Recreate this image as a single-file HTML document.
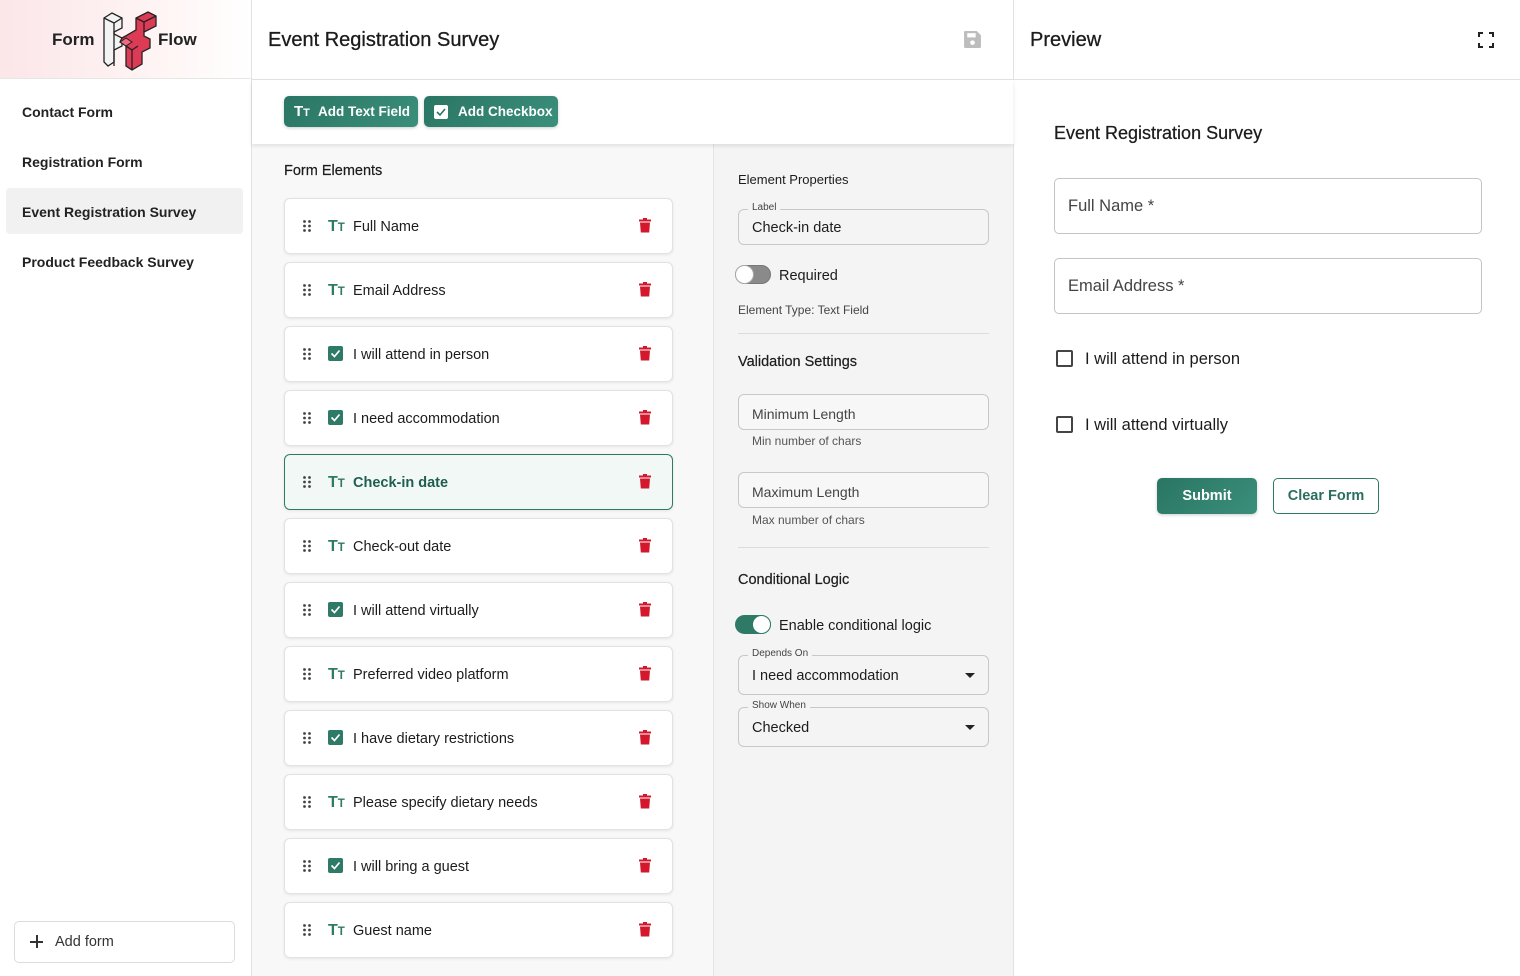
<!DOCTYPE html>
<html><head><meta charset="utf-8"><style>
*{box-sizing:border-box;margin:0;padding:0}
body{width:1520px;height:976px;overflow:hidden;font-family:"Liberation Sans","DejaVu Sans",sans-serif;color:#1c1c1c;background:#fff;position:relative;font-size:14px}
.abs{position:absolute}
.side{left:0;top:0;width:252px;height:976px;border-right:1px solid #e2e2e2;background:#fff}
.logo{left:0;top:0;width:251px;height:79px;background:linear-gradient(90deg,#fbe6e8,#fff6f6 70%,#fff);border-bottom:1px solid #e6e6e6}
.nav{left:6px;width:237px;height:46px;border-radius:4px;padding-left:16px;line-height:48px;font-size:14px;font-weight:600;color:#222}
.hdr{top:0;height:80px;border-bottom:1px solid #e2e2e2;background:#fff}
.tb{left:252px;top:80px;width:761px;height:64px;background:#fff;box-shadow:0 2px 4px rgba(0,0,0,.1);z-index:2}
.btn{top:96px;height:31px;background:linear-gradient(135deg,#2a7563,#3a8f7b);color:#fff;border-radius:5px;font-weight:700;font-size:13.5px;line-height:31px;box-shadow:0 1px 3px rgba(0,0,0,.2)}
.item{left:284px;width:389px;height:56px;background:#fff;border:1px solid #e2e2e2;border-radius:6px;box-shadow:0 1px 3px rgba(0,0,0,.08)}
.item .dots{position:absolute;left:18px;top:21px}
.item .ic{position:absolute;left:43px;top:19px}
.item .t{position:absolute;left:68px;top:1px;line-height:54px;font-size:14.5px}
.item .del{position:absolute;left:354px;top:19px}
.tt{position:absolute;left:43px;top:20px;color:#2f7a66;font-weight:700;font-size:16px;line-height:16px;height:16px}
.tt span{font-size:11.5px}
.field{border:1px solid #c8c8c8;border-radius:6px;background:transparent}
.lbl{font-size:10px;color:#444;background:#f4f4f4;padding:0 4px}
.sep{height:1px;background:#dcdcdc;left:738px;width:251px}
</style></head><body>

<div class="abs side"></div>
<div class="abs logo"></div>
<div class="abs" style="left:52px;top:30px;font-size:17px;font-weight:700;color:#222">Form</div>
<div class="abs" style="left:158px;top:30px;font-size:17px;font-weight:700;color:#222">Flow</div>
<svg class="abs" style="left:100px;top:10px" width="60" height="62" viewBox="0 0 60 62">
<path d="M4 8 L12 3 L22 8 L22 18 L14 22 L14 24 L22 28 L22 36 L14 40 L14 52 L8 56 L4 52Z" fill="#f3f3f3" stroke="#222" stroke-width="1.3"/>
<path d="M4 8 L14 13 L22 8 M14 13 L14 56" fill="none" stroke="#222" stroke-width="1.3"/>
<path d="M22 28 L36 20 L36 8 L48 2 L56 6 L56 16 L44 22 L44 26 L50 29 L50 38 L42 42 L42 54 L32 60 L26 56 L26 36 L20 32Z" fill="#dd3a55" stroke="#222" stroke-width="1.3"/>
<path d="M26 36 L32 40 L32 60 M32 40 L38 36 M36 8 L44 12 L56 6 M44 12 L44 22" fill="none" stroke="#222" stroke-width="1.3"/>
<path d="M20 32 L26 28 L32 32 L26 36Z" fill="#ef6b80" stroke="#222" stroke-width="1"/>
</svg>

<div class="abs nav" style="top:88px">Contact Form</div>
<div class="abs nav" style="top:138px">Registration Form</div>
<div class="abs nav" style="top:188px;background:#f1f1f1">Event Registration Survey</div>
<div class="abs nav" style="top:238px">Product Feedback Survey</div>
<div class="abs" style="left:14px;top:921px;width:221px;height:42px;border:1px solid #dcdcdc;border-radius:5px;line-height:41px;padding-left:40px;font-size:14.5px;color:#333">Add form</div>
<div class="abs" style="left:30px;top:941px;width:13px;height:1.5px;background:#333"></div>
<div class="abs" style="left:36px;top:935px;width:1.5px;height:13px;background:#333"></div>

<!-- middle -->
<div class="abs hdr" style="left:252px;width:762px;border-right:1px solid #e2e2e2"></div>
<div class="abs" style="left:268px;top:29px;font-size:20px;color:#1c1c1c;-webkit-text-stroke:0.3px #1c1c1c">Event Registration Survey</div>
<svg class="abs" style="left:963px;top:30px" width="19" height="19" viewBox="0 0 18 18"><path d="M2 1h11l4 4v11a1 1 0 0 1-1 1H2a1 1 0 0 1-1-1V2a1 1 0 0 1 1-1z" fill="#bdbdbd"/><rect x="4" y="3" width="8" height="4" fill="#fff"/><circle cx="9" cy="12" r="2.2" fill="#fff"/></svg>

<div class="abs" style="left:252px;top:144px;width:461px;height:832px;background:#f8f8f8"></div>
<div class="abs" style="left:713px;top:144px;width:301px;height:832px;background:#f4f4f4;border-left:1px solid #e4e4e4;border-right:1px solid #e2e2e2"></div>
<div class="abs tb"></div>
<div class="abs btn" style="left:284px;width:134px;z-index:3;padding-left:34px">Add Text Field</div>
<div class="abs" style="left:294px;top:104px;z-index:4;color:#fff;font-weight:700;font-size:15px;line-height:15px">T<span style="font-size:11px">T</span></div>
<div class="abs btn" style="left:424px;width:134px;z-index:3;padding-left:34px">Add Checkbox</div>
<svg class="abs" style="left:434px;top:105px;z-index:4" width="14" height="14"><rect width="14" height="14" rx="2" fill="#fff"/><path d="M3 7l3 3 5-6" stroke="#2a7563" stroke-width="1.6" fill="none"/></svg>

<div class="abs" style="left:284px;top:163px;font-size:14.5px;-webkit-text-stroke:0.2px #1c1c1c">Form Elements</div>

<div id="list"></div>

<!-- properties -->
<div class="abs" style="left:738px;top:172px;font-size:13px">Element Properties</div>
<div class="abs field" style="left:738px;top:209px;width:251px;height:36px"></div>
<div class="abs lbl" style="left:748px;top:202px">Label</div>
<div class="abs" style="left:752px;top:220px;font-size:14.5px">Check-in date</div>
<div class="abs" style="left:735px;top:265px;width:36px;height:19px;border-radius:10px;background:#8a8a8a;border:1px solid #777"></div>
<div class="abs" style="left:735px;top:265px;width:19px;height:19px;border-radius:50%;background:#fff;border:1px solid #aaa"></div>
<div class="abs" style="left:779px;top:268px;font-size:14.5px">Required</div>
<div class="abs" style="left:738px;top:303px;font-size:12px;color:#444">Element Type: Text Field</div>
<div class="abs sep" style="top:333px"></div>
<div class="abs" style="left:738px;top:354px;font-size:14.5px;-webkit-text-stroke:0.2px #1c1c1c">Validation Settings</div>
<div class="abs field" style="left:738px;top:394px;width:251px;height:36px;background:#f7f7f7"></div>
<div class="abs" style="left:752px;top:406px;font-size:14px;color:#444">Minimum Length</div>
<div class="abs" style="left:752px;top:434px;font-size:12px;color:#555">Min number of chars</div>
<div class="abs field" style="left:738px;top:472px;width:251px;height:36px;background:#f7f7f7"></div>
<div class="abs" style="left:752px;top:484px;font-size:14px;color:#444">Maximum Length</div>
<div class="abs" style="left:752px;top:513px;font-size:12px;color:#555">Max number of chars</div>
<div class="abs sep" style="top:547px"></div>
<div class="abs" style="left:738px;top:572px;font-size:14.5px;-webkit-text-stroke:0.2px #1c1c1c">Conditional Logic</div>
<div class="abs" style="left:735px;top:615px;width:36px;height:19px;border-radius:10px;background:#2f7a66"></div>
<div class="abs" style="left:752px;top:615px;width:19px;height:19px;border-radius:50%;background:#fff;border:1px solid #2f7a66"></div>
<div class="abs" style="left:779px;top:618px;font-size:14.5px">Enable conditional logic</div>
<div class="abs field" style="left:738px;top:655px;width:251px;height:40px"></div>
<div class="abs lbl" style="left:748px;top:648px">Depends On</div>
<div class="abs" style="left:752px;top:668px;font-size:14.5px">I need accommodation</div>
<div class="abs" style="left:965px;top:673px;border:5px solid transparent;border-top:5px solid #222"></div>
<div class="abs field" style="left:738px;top:707px;width:251px;height:40px"></div>
<div class="abs lbl" style="left:748px;top:700px">Show When</div>
<div class="abs" style="left:752px;top:720px;font-size:14.5px">Checked</div>
<div class="abs" style="left:965px;top:725px;border:5px solid transparent;border-top:5px solid #222"></div>

<!-- preview -->
<div class="abs hdr" style="left:1014px;width:506px"></div>
<div class="abs" style="left:1030px;top:29px;font-size:20px;-webkit-text-stroke:0.3px #1c1c1c">Preview</div>
<svg class="abs" style="left:1478px;top:32px" width="16" height="16" viewBox="0 0 16 16" fill="none" stroke="#222" stroke-width="2"><path d="M1 5V1h4M11 1h4v4M15 11v4h-4M5 15H1v-4"/></svg>
<div class="abs" style="left:1054px;top:123px;font-size:18px;-webkit-text-stroke:0.25px #1c1c1c">Event Registration Survey</div>
<div class="abs" style="left:1054px;top:178px;width:428px;height:56px;border:1px solid #c4c4c4;border-radius:5px"></div>
<div class="abs" style="left:1068px;top:197px;font-size:16.5px;color:#444">Full Name *</div>
<div class="abs" style="left:1054px;top:258px;width:428px;height:56px;border:1px solid #c4c4c4;border-radius:5px"></div>
<div class="abs" style="left:1068px;top:277px;font-size:16.5px;color:#444">Email Address *</div>
<div class="abs" style="left:1056px;top:350px;width:17px;height:17px;border:2px solid #444;border-radius:2px"></div>
<div class="abs" style="left:1085px;top:350px;font-size:16.5px">I will attend in person</div>
<div class="abs" style="left:1056px;top:416px;width:17px;height:17px;border:2px solid #444;border-radius:2px"></div>
<div class="abs" style="left:1085px;top:416px;font-size:16.5px">I will attend virtually</div>
<div class="abs" style="left:1157px;top:478px;width:100px;height:36px;border-radius:5px;background:linear-gradient(135deg,#2a7563,#3a8f7b);color:#fff;font-weight:700;font-size:14.5px;text-align:center;line-height:37px;box-shadow:0 1px 3px rgba(0,0,0,.2)">Submit</div>
<div class="abs" style="left:1273px;top:478px;width:106px;height:36px;border-radius:5px;border:1px solid #2f7a66;color:#2a6e60;font-weight:600;font-size:14.5px;text-align:center;line-height:35px">Clear Form</div>

<script>
var items=[["t","Full Name"],["t","Email Address"],["c","I will attend in person"],["c","I need accommodation"],["t","Check-in date"],["t","Check-out date"],["c","I will attend virtually"],["t","Preferred video platform"],["c","I have dietary restrictions"],["t","Please specify dietary needs"],["c","I will bring a guest"],["t","Guest name"]];
var h="";
items.forEach(function(it,i){
 var y=198+i*64, sel=i==4;
 var ic=it[0]=="t"?'<div class="tt">T<span>T</span></div>':'<svg class="ic" width="15" height="15"><rect width="15" height="15" rx="2" fill="#2f7a66"/><path d="M3.5 7.5l3 3 5-6" stroke="#fff" stroke-width="1.7" fill="none"/></svg>';
 var dots='<svg class="dots" width="8" height="12">'+[0,1,2].map(function(r){return '<circle cx="1.5" cy="'+(1.5+r*4.5)+'" r="1.4" fill="#444"/><circle cx="6.5" cy="'+(1.5+r*4.5)+'" r="1.4" fill="#444"/>'}).join("")+'</svg>';
 var del='<svg class="del" width="12" height="15" viewBox="0 0 12 15"><rect x="0" y="1.5" width="12" height="2" fill="#d3182e"/><rect x="4" y="0" width="4" height="2" fill="#d3182e"/><path d="M1 4.5h10l-.8 10H1.8z" fill="#d3182e"/></svg>';
 h+='<div class="abs item" style="top:'+y+'px;'+(sel?'background:#f1f8f6;border-color:#2f7a66;':'')+'">'+dots+ic+'<div class="t" style="'+(sel?'font-weight:700;color:#1f5e50':'')+'">'+it[1]+'</div>'+del+'</div>';
});
document.getElementById("list").outerHTML=h;
</script>
</body></html>
